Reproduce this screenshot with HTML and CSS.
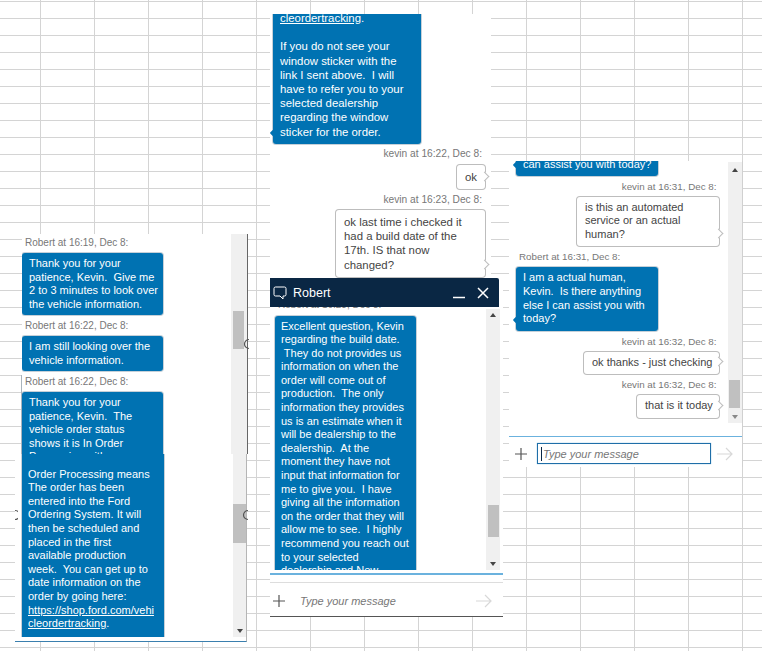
FILE: index.html
```html
<!DOCTYPE html>
<html lang="en">
<head>
<meta charset="utf-8">
<title>Chat transcript</title>
<link rel="stylesheet" href="styles.css">
</head>
<body>
<main class="desk">

  <section class="window win-a">
    <div class="msgs">
      <div class="label">Robert at 16:19, Dec 8:</div>
      <div class="bubble agent">Thank you for your<br>patience, Kevin.  Give me<br>2 to 3 minutes to look over<br>the vehicle information.</div>
      <div class="label gap">Robert at 16:22, Dec 8:</div>
      <div class="bubble agent">I am still looking over the<br>vehicle information.</div>
      <div class="label gap">Robert at 16:22, Dec 8:</div>
      <div class="bubble agent">Thank you for your<br>patience, Kevin.  The<br>vehicle order status<br>shows it is In Order<br>Processing with</div>
    </div>
    <div class="scroll"><div class="thumb"></div></div>
  </section>
  <div class="seam"></div>

  <section class="window win-b">
    <div class="msgs">
      <div class="bubble agent"><br>Order Processing means<br>The order has been<br>entered into the Ford<br>Ordering System. It will<br>then be scheduled and<br>placed in the first<br>available production<br>week.  You can get up to<br>date information on the<br>order by going here:<br><a href="#">https://shop.ford.com/vehi<br>cleordertracking</a>.</div>
    </div>
    <div class="scroll"><div class="thumb"></div><div class="arrow down"></div></div>
  </section>

  <section class="window win-c">
    <div class="bubble agent tailed"><a href="#">cleordertracking</a>.<br><br>If you do not see your<br>window sticker with the<br>link I sent above.  I will<br>have to refer you to your<br>selected dealership<br>regarding the window<br>sticker for the order.</div>
    <div class="label right">kevin at 16:22, Dec 8:</div>
    <div class="bubble user size-ok">ok</div>
    <div class="label right">kevin at 16:23, Dec 8:</div>
    <div class="bubble user size-build">ok last time i checked it<br>had a build date of the<br>17th. IS that now<br>changed?</div>
  </section>

  <section class="window win-d">
    <header class="titlebar">
      <svg class="chat-icon" viewBox="0 0 14 14" width="14" height="14" aria-hidden="true"><path d="M2.5 1h9A1.5 1.5 0 0 1 13 2.500v6A1.500 1.500 0 0 1 11.500 10H10v3L7 10H2.500A1.500 1.500 0 0 1 1 8.500v-6A1.500 1.500 0 0 1 2.500 1z" fill="none" stroke="#fff" stroke-width="1"/></svg>
      <span class="title">Robert</span>
      <svg class="win-btn" viewBox="0 0 12 12" width="12" height="12" aria-hidden="true"><path d="M0 10.500h12" stroke="#fff" stroke-width="1.500"/></svg>
      <svg class="win-btn" viewBox="0 0 12 12" width="12" height="12" aria-hidden="true"><path d="M1 1l10 10M11 1L1 11" stroke="#fff" stroke-width="1.500"/></svg>
    </header>
    <div class="body">
      <div class="msgs">
        <div class="label">Robert at 16:23, Dec 8:</div>
        <div class="bubble agent">Excellent question, Kevin<br>regarding the build date.<br> They do not provides us<br>information on when the<br>order will come out of<br>production.  The only<br>information they provides<br>us is an estimate when it<br>will be dealership to the<br>dealership.  At the<br>moment they have not<br>input that information for<br>me to give you.  I have<br>giving all the information<br>on the order that they will<br>allow me to see.  I highly<br>recommend you reach out<br>to your selected<br>dealership and New</div>
      </div>
      <div class="scroll"><div class="arrow up"></div><div class="thumb"></div><div class="arrow down"></div></div>
    </div>
    <div class="composer">
      <svg class="plus" viewBox="0 0 12 12" width="12" height="12" aria-hidden="true"><path d="M6 0v12M0 6h12" stroke="#555" stroke-width="1.200"/></svg>
      <span class="placeholder">Type your message</span>
      <svg class="send" viewBox="0 0 16 14" width="16" height="14" aria-hidden="true"><path d="M0 7h15M9 1l6 6-6 6" fill="none" stroke="#d8d8d8" stroke-width="1.200"/></svg>
    </div>
  </section>

  <section class="window win-e">
    <div class="body">
      <div class="msgs">
        <div class="bubble agent tailed">can assist you with today?</div>
        <div class="label right">kevin at 16:31, Dec 8:</div>
        <div class="bubble user size-human">is this an automated<br>service or an actual<br>human?</div>
        <div class="label">Robert at 16:31, Dec 8:</div>
        <div class="bubble agent tailed">I am a actual human,<br>Kevin.  Is there anything<br>else I can assist you with<br>today?</div>
        <div class="label right">kevin at 16:32, Dec 8:</div>
        <div class="bubble user size-thanks">ok thanks - just checking</div>
        <div class="label right">kevin at 16:32, Dec 8:</div>
        <div class="bubble user size-today">that is it today</div>
      </div>
      <div class="scroll"><div class="arrow up"></div><div class="thumb"></div><div class="arrow down"></div></div>
    </div>
    <div class="composer">
      <svg class="plus" viewBox="0 0 12 12" width="12" height="12" aria-hidden="true"><path d="M6 0v12M0 6h12" stroke="#555" stroke-width="1.200"/></svg>
      <div class="field"><span class="caret"></span><span class="placeholder">Type your message</span></div>
      <svg class="send" viewBox="0 0 16 14" width="16" height="14" aria-hidden="true"><path d="M0 7h15M9 1l6 6-6 6" fill="none" stroke="#d8d8d8" stroke-width="1.200"/></svg>
    </div>
  </section>

  <svg class="handle handle-a" viewBox="0 0 8 12" width="8" height="12" aria-hidden="true"><path d="M7 1.500A4.500 4.500 0 1 0 7 10.500" fill="none" stroke="#555" stroke-width="1.200"/></svg>
  <svg class="handle handle-b" viewBox="0 0 8 12" width="8" height="12" aria-hidden="true"><path d="M7 1.500A4.500 4.500 0 1 0 7 10.500" fill="none" stroke="#555" stroke-width="1.200"/></svg>
  <svg class="handle handle-c" viewBox="0 0 3 12" width="3" height="12" aria-hidden="true"><path d="M0 1.500A4.500 4.500 0 0 1 0 10.500" fill="none" stroke="#555" stroke-width="1.200"/></svg>
</main>
</body>
</html>
```

FILE: styles.css
```css
* { box-sizing: border-box; }

html, body { margin: 0; padding: 0; background: #fff; }

.desk {
  position: relative;
  width: 762px;
  height: 651px;
  overflow: hidden;
  font-family: "Liberation Sans", Arial, sans-serif;
  font-size: 11px;
  background-color: #fff;
  background-image:
    linear-gradient(#d4d4d4 1px, transparent 1px),
    linear-gradient(90deg, #d4d4d4 1px, transparent 1px);
  background-size: 54px 17px;
  background-position: 40px 1px;
}

/* free-floating windows pasted on the sheet */
.window {
  position: absolute;
  background: #fff;
  overflow: hidden;
}

.msgs { flex: 1; min-width: 0; overflow: hidden; }

.label {
  height: 12px;
  margin-bottom: 4px;
  font-size: 10px;
  line-height: 12px;
  color: #777;
  white-space: nowrap;
}
.label.right { text-align: right; }

.bubble {
  position: relative;
  border-radius: 3px;
  white-space: pre;
  line-height: 13.6px;
}
.bubble a { color: inherit; text-decoration: underline; }

.agent {
  width: 141px;
  padding: 4px 7px 5px;
  background: #0072b2;
  color: #fff;
  box-shadow: 0 0 0 1px #c6d0d8;
}
.tailed::before {
  content: "";
  position: absolute;
  left: -2px;
  bottom: 8px;
  width: 6px;
  height: 6px;
  border-radius: 1px;
  background: #0072b2;
  transform: rotate(45deg);
}
.user {
  margin-left: auto;
  padding: 4px 7px 5px 8px;
  background: #fff;
  color: #444;
  box-shadow: 0 0 0 1px #bdbdbd;
}
.user::after {
  content: "";
  position: absolute;
  right: -3px;
  bottom: 9px;
  width: 6px;
  height: 6px;
  background: #fff;
  border-top: 1px solid #bdbdbd;
  border-right: 1px solid #bdbdbd;
  transform: rotate(45deg);
}
.size-ok { width: 28px; }
.size-build { width: 149px; }
.size-human { width: 142px; }
.size-thanks { width: 135px; }
.size-today { width: 82px; }

.scroll {
  display: flex;
  flex-direction: column;
  flex: none;
  background: #f0f0f0;
}
.thumb { flex: none; background: #c0c0c0; }
.arrow {
  flex: none;
  align-self: center;
  width: 0;
  height: 0;
  border-left: 3.500px solid transparent;
  border-right: 3.500px solid transparent;
}
.arrow.up { border-bottom: 4px solid #444; }
.arrow.down { margin-top: auto; border-top: 4px solid #444; }

/* Left, upper clipping */
.win-a {
  left: 22px;
  top: 234px;
  width: 226px;
  height: 220px;
  display: flex;
  border-right: 1px solid #666;
}
.win-a .msgs { padding-top: 3px; }
.win-a .label { padding-left: 3px; }
.win-a .label.gap { margin-top: 5px; }
.win-a .bubble { padding-bottom: 4px; line-height: 13.5px; }
.win-a .scroll { width: 16px; padding: 77px 3px 0 2px; }
.win-a .thumb { height: 38px; }

.seam {
  position: absolute;
  left: 21px;
  top: 375px;
  width: 1px;
  height: 79px;
  background: #a9b4bd;
}

/* Left, lower clipping */
.win-b {
  left: 15px;
  top: 454px;
  width: 232px;
  height: 188px;
  display: flex;
  padding-bottom: 4px;
  border-right: 1.500px solid #b5b5b5;
  border-bottom: 1.500px solid #3a7fae;
}
.win-b .msgs { padding-left: 7px; }
.win-b .bubble {
  width: 142px;
  height: 183px;
  padding: 0 6px;
  border-radius: 0;
}
.win-b .scroll { width: 13px; padding-bottom: 4px; }
.win-b .thumb { height: 39px; margin-top: 50px; }

/* Top centre clipping */
.win-c {
  left: 270px;
  top: 14px;
  width: 221px;
  height: 264px;
  padding: 0 6px 0 3px;
}
.win-c .bubble { font-size: 11.400px; line-height: 14.200px; }
.win-c .agent {
  width: 148px;
  margin-top: -4px;
  padding: 1px 7px 5px;
}
.win-c .label {
  margin: 4.500px 3px 4.500px 0;
  font-size: 10.200px;
}
.win-c .user { padding-top: 5px; padding-bottom: 5px; }

/* Centre chat window */
.win-d {
  left: 270px;
  top: 278px;
  width: 233px;
  height: 339px;
  border-bottom: 1px solid #555;
}
.titlebar {
  display: flex;
  align-items: center;
  width: 229px;
  height: 28.500px;
  padding: 1px 10px 0 3px;
  background: #0a2744;
  color: #fff;
  border-top-right-radius: 2px;
}
.chat-icon { margin-top: 1px; }
.title { flex: 1; margin-left: 6px; padding-top: 1px; font-size: 12.500px; }
.win-btn { margin-left: 12px; }

.win-d .body {
  display: flex;
  height: 263px;
  margin-right: 3px;
}
.win-d .msgs { padding-left: 5px; }
.win-d .label { margin: -8px 0 5px; padding-left: 3px; }
.win-d .scroll { width: 14px; margin-top: 2px; padding: 4px 0; }
.win-d .thumb { width: 11px; height: 32px; margin: 188px 0 0 2px; }
.win-d .bubble { height: 256px; padding-left: 6px; }

.composer {
  display: flex;
  align-items: center;
  border-top: 1px solid #6bb2de;
}
.plus { flex: none; }
.placeholder { font-style: italic; color: #777; font-size: 11px; white-space: nowrap; }
.send { flex: none; }

.win-d .composer {
  position: relative;
  height: 44px;
  margin-top: 3px;
  padding: 10px 0 0 3px;
  border-top-width: 2px;
}
.win-d .composer::before {
  content: "";
  position: absolute;
  left: 0;
  right: 0;
  top: 7px;
  height: 1px;
  background: #ddd;
}
.win-d .placeholder { flex: 1; margin-left: 15px; }
.win-d .send { margin-right: 11px; }

/* Right chat window */
.win-e {
  left: 509px;
  top: 161px;
  width: 234px;
  height: 306px;
  border-right: 1px solid #d0d0d0;
}
.win-e .body { display: flex; height: 262px; }
.win-e .msgs { padding: 0 9px 0 7px; }
.win-e .agent { width: 142px; }
.win-e .agent:first-child { margin-top: -3px; padding: 0 7px 4px; }
.win-e .label { margin: 5px 0 4px; padding-left: 3px; font-size: 9.800px; }
.win-e .label.right { padding: 0 2.500px 0 0; }
.win-e .scroll { width: 14px; margin-top: 1px; padding: 6px 0 4px; }
.win-e .arrow.down { border-top-color: #888; }
.win-e .thumb { width: 11px; height: 28px; margin: 208px 0 0 1px; }

.win-e .composer {
  height: 32px;
  margin-top: 13px;
  padding: 2px 9px 0 6px;
}
.field {
  display: flex;
  align-items: center;
  flex: 1;
  height: 21px;
  margin: 0 6px 0 10px;
  padding-left: 3px;
  border: 1px solid #1f6ea8;
  box-shadow: 0 0 1px #6db2dc;
}
.caret {
  width: 1px;
  height: 14px;
  margin-right: 1px;
  background: #0a2744;
}

/* selection handles over the pasted picture */
.handle { position: absolute; }
.handle-a { left: 242px; top: 338px; }
.handle-b { left: 241px; top: 509px; }
.handle-c { left: 15px; top: 509px; }
```
